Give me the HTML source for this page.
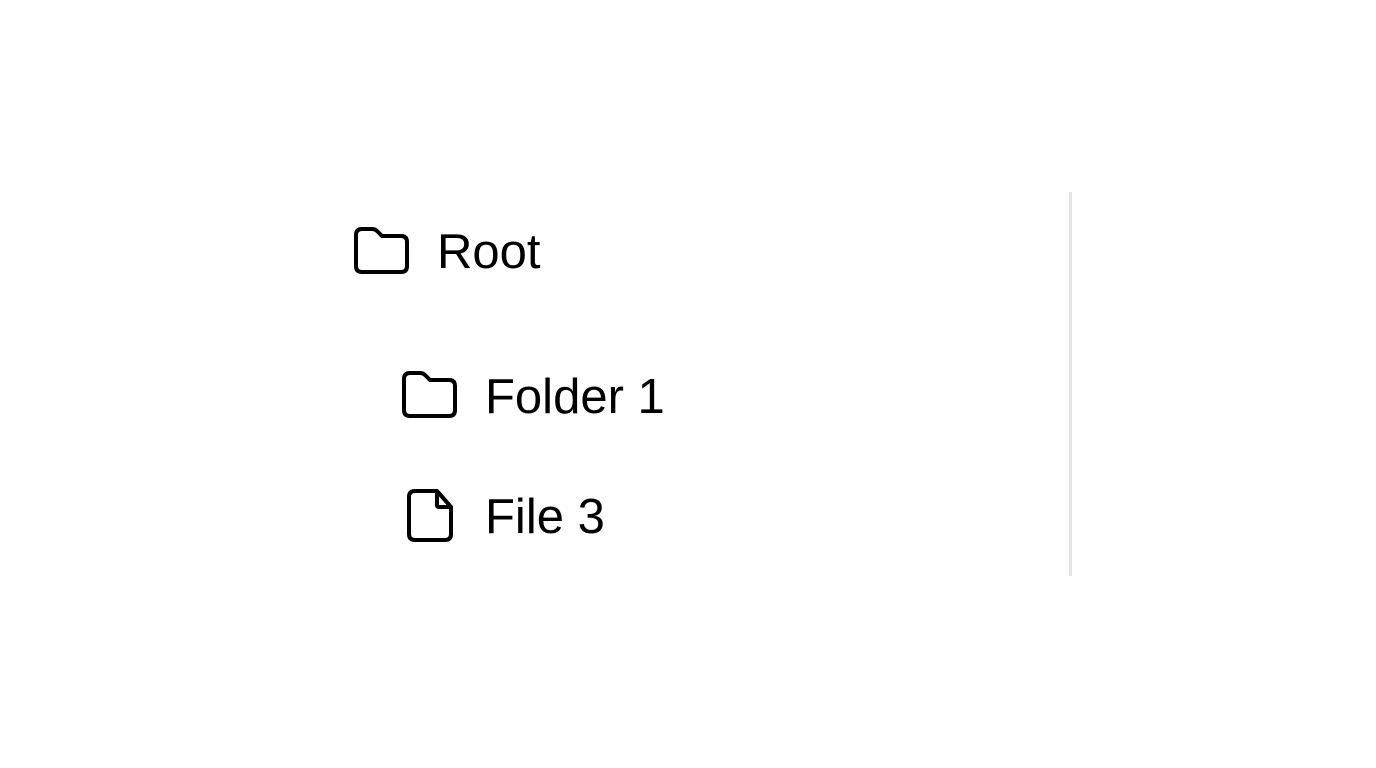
<!DOCTYPE html>
<html><head><style>
html,body{margin:0;padding:0;background:#fff;width:1376px;height:768px;overflow:hidden;position:relative;font-family:"Liberation Sans",sans-serif;}
.t{position:absolute;font-size:49px;line-height:1;color:#000;white-space:nowrap;}
svg{position:absolute;left:0;top:0;}
.line{position:absolute;left:1069px;top:192px;width:3px;height:384px;background:#e6e6e6;}
</style></head><body>
<svg width="1376" height="768" fill="none" stroke="#000" stroke-width="4" stroke-linejoin="round" stroke-linecap="round">
<path d="M356,266 V235 Q356,229 362,229 H372 Q375,229 377,231 L382,236 H401 Q407,236 407,242 V266 Q407,272 401,272 H362 Q356,272 356,266 Z"/>
<path d="M404,410 V379 Q404,373 410,373 H420 Q423,373 425,375 L430,380 H449 Q455,380 455,386 V410 Q455,416 449,416 H410 Q404,416 404,410 Z"/>
<path d="M409,534 V497 Q409,491 415,491 H437 L451,507 V534 Q451,540 445,540 H415 Q409,540 409,534 Z"/>
<path d="M437,492 V505 Q437,507 439,507 H450"/>
</svg>
<div class="t" style="left:437px;top:228px;">Root</div>
<div class="t" style="left:485px;top:373px;">Folder 1</div>
<div class="t" style="left:485px;top:493px;">File 3</div>
<div class="line"></div>
</body></html>
